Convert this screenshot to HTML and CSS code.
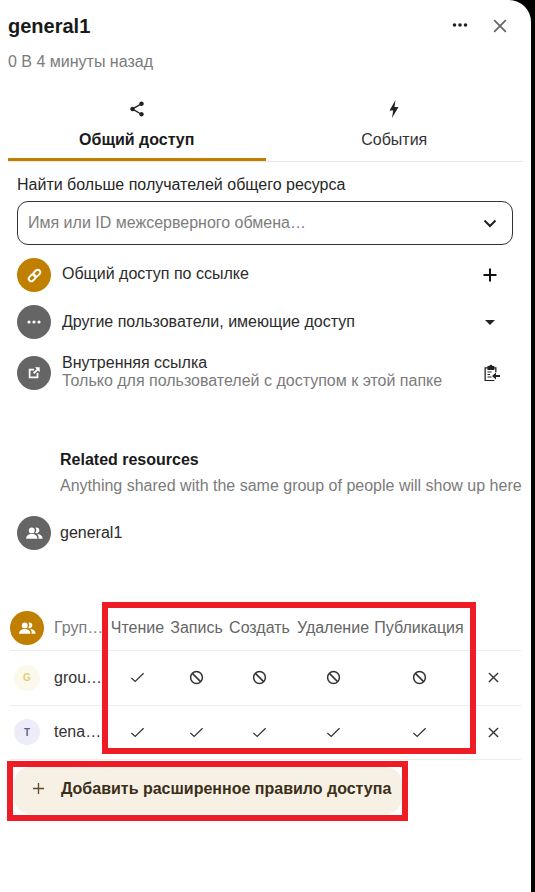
FILE: index.html
```html
<!DOCTYPE html>
<html lang="ru">
<head>
<meta charset="utf-8">
<title>general1</title>
<link rel="stylesheet" href="styles.css">
</head>
<body>
<svg class="defs" width="0" height="0" aria-hidden="true">
  <symbol id="i-group" viewBox="0 0 24 16"><circle cx="9" cy="4.500" r="3.900"/><path d="M1.500 15.500c0-4 3-6.300 7.500-6.300s7.500 2.300 7.500 6.300z"/><path d="M13.600 7.900a3.800 3.800 0 1 0 .3-6.900 5.500 5.500 0 0 1-.3 6.900z"/><path d="M15 9c3.200 1 3.200 4.500 3.200 6.500h5.300c0-3.500-3-6.300-8.500-6.500z"/></symbol>
  <symbol id="i-check" viewBox="0 0 16 16"><path d="M1.500 8.500l4 3.700L14.500 3.500" fill="none" stroke="currentColor" stroke-width="1.300"/></symbol>
  <symbol id="i-block" viewBox="0 0 16 16"><circle cx="8" cy="8" r="6.300" fill="none" stroke="currentColor" stroke-width="1.600"/><path d="M3.600 3.600l8.800 8.800" stroke="currentColor" stroke-width="1.600"/></symbol>
  <symbol id="i-close" viewBox="0 0 12 12"><path d="M1 1l10 10M11 1L1 11" stroke="currentColor" stroke-width="1.500"/></symbol>
</svg>
<main class="panel">
  <header class="head">
    <div class="head-text">
      <h1 class="title">general1</h1>
      <p class="meta">0 В 4 минуты назад</p>
    </div>
    <svg class="head-more" width="16" height="4" viewBox="0 0 16 4"><circle cx="2.500" cy="2" r="1.800"/><circle cx="8" cy="2" r="1.800"/><circle cx="13.500" cy="2" r="1.800"/></svg>
    <svg class="head-close" width="14" height="14"><use href="#i-close"/></svg>
  </header>

  <nav class="tabs">
    <div class="tab tab-active">
      <svg class="tab-icon" width="18" height="18" viewBox="0 0 24 24"><path d="M18 16.100c-.8 0-1.500.3-2 .8l-7.100-4.200c.1-.2.1-.5.100-.7s0-.5-.1-.7l7-4.100c.5.500 1.300.8 2.100.8 1.700 0 3-1.300 3-3s-1.300-3-3-3-3 1.300-3 3c0 .2 0 .5.100.7L8 9.800C7.500 9.300 6.800 9 6 9c-1.700 0-3 1.300-3 3s1.300 3 3 3c.8 0 1.500-.3 2-.8l7.100 4.200c-.1.200-.1.400-.1.600 0 1.600 1.300 2.900 3 2.900s3-1.300 3-2.900-1.300-2.900-3-2.900z"/></svg>
      <span>Общий доступ</span>
    </div>
    <div class="tab">
      <svg class="tab-icon" width="18" height="20" viewBox="0 0 18 20"><path d="M10.500 1L4.500 11.500h3.700L7 19l6.500-11H9.500z"/></svg>
      <span>События</span>
    </div>
  </nav>

  <section class="share">
    <label class="field-label">Найти больше получателей общего ресурса</label>
    <div class="select">
      <span class="placeholder">Имя или ID межсерверного обмена…</span>
      <svg width="14" height="9" viewBox="0 0 14 9"><path d="M1.500 1.500L7 7l5.500-5.500" fill="none" stroke="#222" stroke-width="2"/></svg>
    </div>

    <div class="row row-link">
      <span class="avatar avatar-gold">
        <svg width="15" height="15" viewBox="0 0 16 16"><g fill="none" stroke="#fff" stroke-width="2" transform="rotate(-45 8 8)"><rect x="0.500" y="5.300" width="8" height="5.400" rx="2.700"/><rect x="7.500" y="5.300" width="8" height="5.400" rx="2.700"/></g></svg>
      </span>
      <span class="row-text">Общий доступ по ссылке</span>
      <svg class="row-end" width="14" height="14" viewBox="0 0 14 14"><path d="M7 .5v13M.5 7h13" stroke="#111" stroke-width="2"/></svg>
    </div>

    <div class="row row-others">
      <span class="avatar avatar-grey">
        <svg width="14" height="4" viewBox="0 0 14 4"><circle cx="2" cy="2" r="1.600"/><circle cx="7" cy="2" r="1.600"/><circle cx="12" cy="2" r="1.600"/></svg>
      </span>
      <span class="row-text">Другие пользователи, имеющие доступ</span>
      <svg class="row-end caret" width="10" height="5" viewBox="0 0 10 5"><path d="M0 0h10L5 5z" fill="#222"/></svg>
    </div>

    <div class="row row-internal">
      <span class="avatar avatar-grey">
        <svg width="14" height="14" viewBox="0 0 16 16"><path d="M2 3h6v2H4v7h7V8h2v6H2z"/><path d="M9 1.500h5.500V7l-2-2L8.300 9.200 6.800 7.700 11 3.500z"/></svg>
      </span>
      <span class="row-stack">
        <span class="row-text">Внутренняя ссылка</span>
        <span class="row-sub">Только для пользователей с доступом к этой папке</span>
      </span>
      <svg class="row-end clip" width="17" height="18" viewBox="0 0 17 18"><path d="M1.500 3.200h3V2h1.800a1.700 1.700 0 0 1 3.200 0h1.800v1.200h2.200v5h-1.300V4.500h-.9v1.400H4.500V4.500H2.800V16h8.500v1H1.500z" fill="#222"/><path d="M4.500 8h4M4.500 10.500h2.500M4.500 13h4" stroke="#222" stroke-width="1.200"/><path d="M17 11h-4V8.600L9 12l4 3.400V13h4z" fill="#222"/></svg>
    </div>
  </section>

  <section class="related">
    <h2 class="related-title">Related resources</h2>
    <p class="related-sub">Anything shared with the same group of people will show up here</p>
    <div class="related-item">
      <span class="avatar avatar-grey"><svg width="18" height="12" fill="#fff"><use href="#i-group"/></svg></span>
      <span class="row-text">general1</span>
    </div>
  </section>

  <section class="rules">
    <div class="grid grid-head">
      <div class="who">
        <span class="avatar avatar-gold"><svg width="18" height="12" fill="#fff"><use href="#i-group"/></svg></span>
        <span class="who-name who-head">Груп…</span>
      </div>
      <span class="col">Чтение</span>
      <span class="col">Запись</span>
      <span class="col">Создать</span>
      <span class="col">Удаление</span>
      <span class="col">Публикация</span>
      <span></span>
    </div>
    <div class="grid grid-row">
      <div class="who">
        <span class="mini mini-g">G</span>
        <span class="who-name">grou…</span>
      </div>
      <svg class="mark" width="15" height="15"><use href="#i-check"/></svg>
      <svg class="mark" width="15" height="15"><use href="#i-block"/></svg>
      <svg class="mark" width="15" height="15"><use href="#i-block"/></svg>
      <svg class="mark" width="15" height="15"><use href="#i-block"/></svg>
      <svg class="mark" width="15" height="15"><use href="#i-block"/></svg>
      <svg class="mark" width="11" height="11"><use href="#i-close"/></svg>
    </div>
    <div class="grid grid-row">
      <div class="who">
        <span class="mini mini-t">T</span>
        <span class="who-name">tena…</span>
      </div>
      <svg class="mark" width="15" height="15"><use href="#i-check"/></svg>
      <svg class="mark" width="15" height="15"><use href="#i-check"/></svg>
      <svg class="mark" width="15" height="15"><use href="#i-check"/></svg>
      <svg class="mark" width="15" height="15"><use href="#i-check"/></svg>
      <svg class="mark" width="15" height="15"><use href="#i-check"/></svg>
      <svg class="mark" width="11" height="11"><use href="#i-close"/></svg>
    </div>
    <div class="highlight"></div>
  </section>

  <div class="add-frame">
    <button class="add" type="button">
      <svg width="11" height="11" viewBox="0 0 11 11"><path d="M5.500 0v11M0 5.500h11" stroke="#5c4a28" stroke-width="1.300"/></svg>
      <span>Добавить расширенное правило доступа</span>
    </button>
  </div>
</main>
</body>
</html>
```

FILE: styles.css
```css
* { box-sizing: border-box; }
html, body { margin: 0; height: 100%; }
body {
  background: #000;
  font-family: "Liberation Sans", Arial, sans-serif;
  font-size: 16px;
  color: #1f1f1f;
  overflow: hidden;
}
.defs { position: absolute; }
.panel {
  width: 531px;
  height: 892px;
  background: #fff;
  border-top-right-radius: 22px;
  padding-top: 14px;
}
p, h1, h2 { margin: 0; }

/* header */
.head {
  display: flex;
  align-items: flex-start;
  padding: 0 24px 0 8px;
  height: 62px;
}
.head-text { flex: 1; }
.title { font-size: 20px; line-height: 24px; font-weight: 700; color: #1a1a1a; }
.meta { margin-top: 16px; line-height: 16px; color: #7b7b7b; }
.head-more { margin-top: 9px; fill: #222; }
.head-close { margin: 5px 0 0 25px; color: #666; }

/* tabs */
.tabs {
  display: flex;
  margin: 23px 8px 0;
  width: 515px;
  border-bottom: 1px solid #e8e8e8;
}
.tab {
  flex: 1;
  height: 62px;
  display: flex;
  flex-direction: column;
  align-items: center;
  line-height: 18px;
  color: #333;
}
.tab span { margin-top: 12px; }
.tab-active { font-weight: 700; color: #1a1a1a; border-bottom: 3px solid #c17f00; margin-bottom: -1px; }
.tab-icon { fill: #222; height: 20px; }

/* share */
.share { padding: 14px 18px 0 17px; }
.field-label { display: block; line-height: 18px; color: #262626; }
.select {
  margin-top: 7px;
  height: 44px;
  border: 1px solid #333;
  border-radius: 11px;
  display: flex;
  align-items: center;
  justify-content: space-between;
  padding: 0 15px 0 10px;
}
.placeholder { color: #7d7d7d; margin-top: -1px; }
.row { display: flex; align-items: center; }
.row-link { margin-top: 13px; }
.row-others { margin-top: 13px; }
.row-internal { margin-top: 17px; }
.avatar {
  flex: none;
  width: 34px;
  height: 34px;
  border-radius: 50%;
  display: flex;
  align-items: center;
  justify-content: center;
  fill: #fff;
}
.avatar-gold { background: #c17f00; }
.avatar-grey { background: #656565; }
.avatar-grey svg { fill: #fff; }
.row-text { line-height: 18px; color: #2b2b2b; }
.row > .row-text, .row-stack { margin-left: 11px; flex: 1; }
.row-link > .row-text { margin-top: -3px; }
.row-stack { display: flex; flex-direction: column; margin-top: -2px; }
.row-sub { line-height: 18px; color: #7b7b7b; white-space: nowrap; }
.row-end { flex: none; margin-right: 16px; }
.caret { margin-right: 18px; }
.clip { margin-right: 13px; }

/* related */
.related { padding: 61px 0 0 17px; }
.related-title { margin-left: 43px; font-size: 16px; line-height: 18px; font-weight: 700; color: #1a1a1a; }
.related-sub { margin: 8px 0 0 43px; line-height: 17px; color: #7b7b7b; white-space: nowrap; }
.related-item { display: flex; align-items: center; gap: 9px; margin-top: 22px; }

/* rules table */
.rules { position: relative; margin: 56px 10px 0; width: 511px; }
.grid {
  display: grid;
  grid-template-columns: 98px 59px 59px 67px 80px 92px 56px;
  align-items: center;
  border-bottom: 1px solid #ececec;
}
.grid-head { height: 45px; }
.grid-row { height: 54.500px; }
.who { display: flex; align-items: center; min-width: 0; }
.who-name { color: #333; white-space: nowrap; }
.who-head { color: #7b7b7b; margin-left: 10px; }
.grid-head .avatar { margin-top: -1px; }
.col { justify-self: center; color: #666; white-space: nowrap; }
.mark { justify-self: center; color: #333; }
.mini {
  flex: none;
  width: 26px;
  height: 26px;
  margin: 0 14px 0 4px;
  border-radius: 50%;
  display: flex;
  align-items: center;
  justify-content: center;
  font-size: 10px;
  font-weight: 700;
}
.mini-g { background: #fbf8ec; color: #e3cd7c; }
.mini-t { background: #ecedf9; color: #5f6390; }
.highlight {
  position: absolute;
  left: 92px;
  top: -4px;
  width: 374px;
  height: 152px;
  border: 6px solid #ee1c25;
}

/* add button */
.add-frame {
  width: 401px;
  height: 60px;
  margin: 1px 0 0 7px;
  border: 6px solid #ee1c25;
  background: #fff;
  padding: 0 0 1px 1px;
}
.add {
  width: 100%;
  height: 100%;
  border: 0;
  padding: 0 0 4px 19px;
  margin: 0;
  background: #f7f1e5;
  border-radius: 16px;
  display: flex;
  align-items: center;
  gap: 17px;
  font: 700 16px "Liberation Sans", Arial, sans-serif;
  color: #3b2f19;
  white-space: nowrap;
}
```
